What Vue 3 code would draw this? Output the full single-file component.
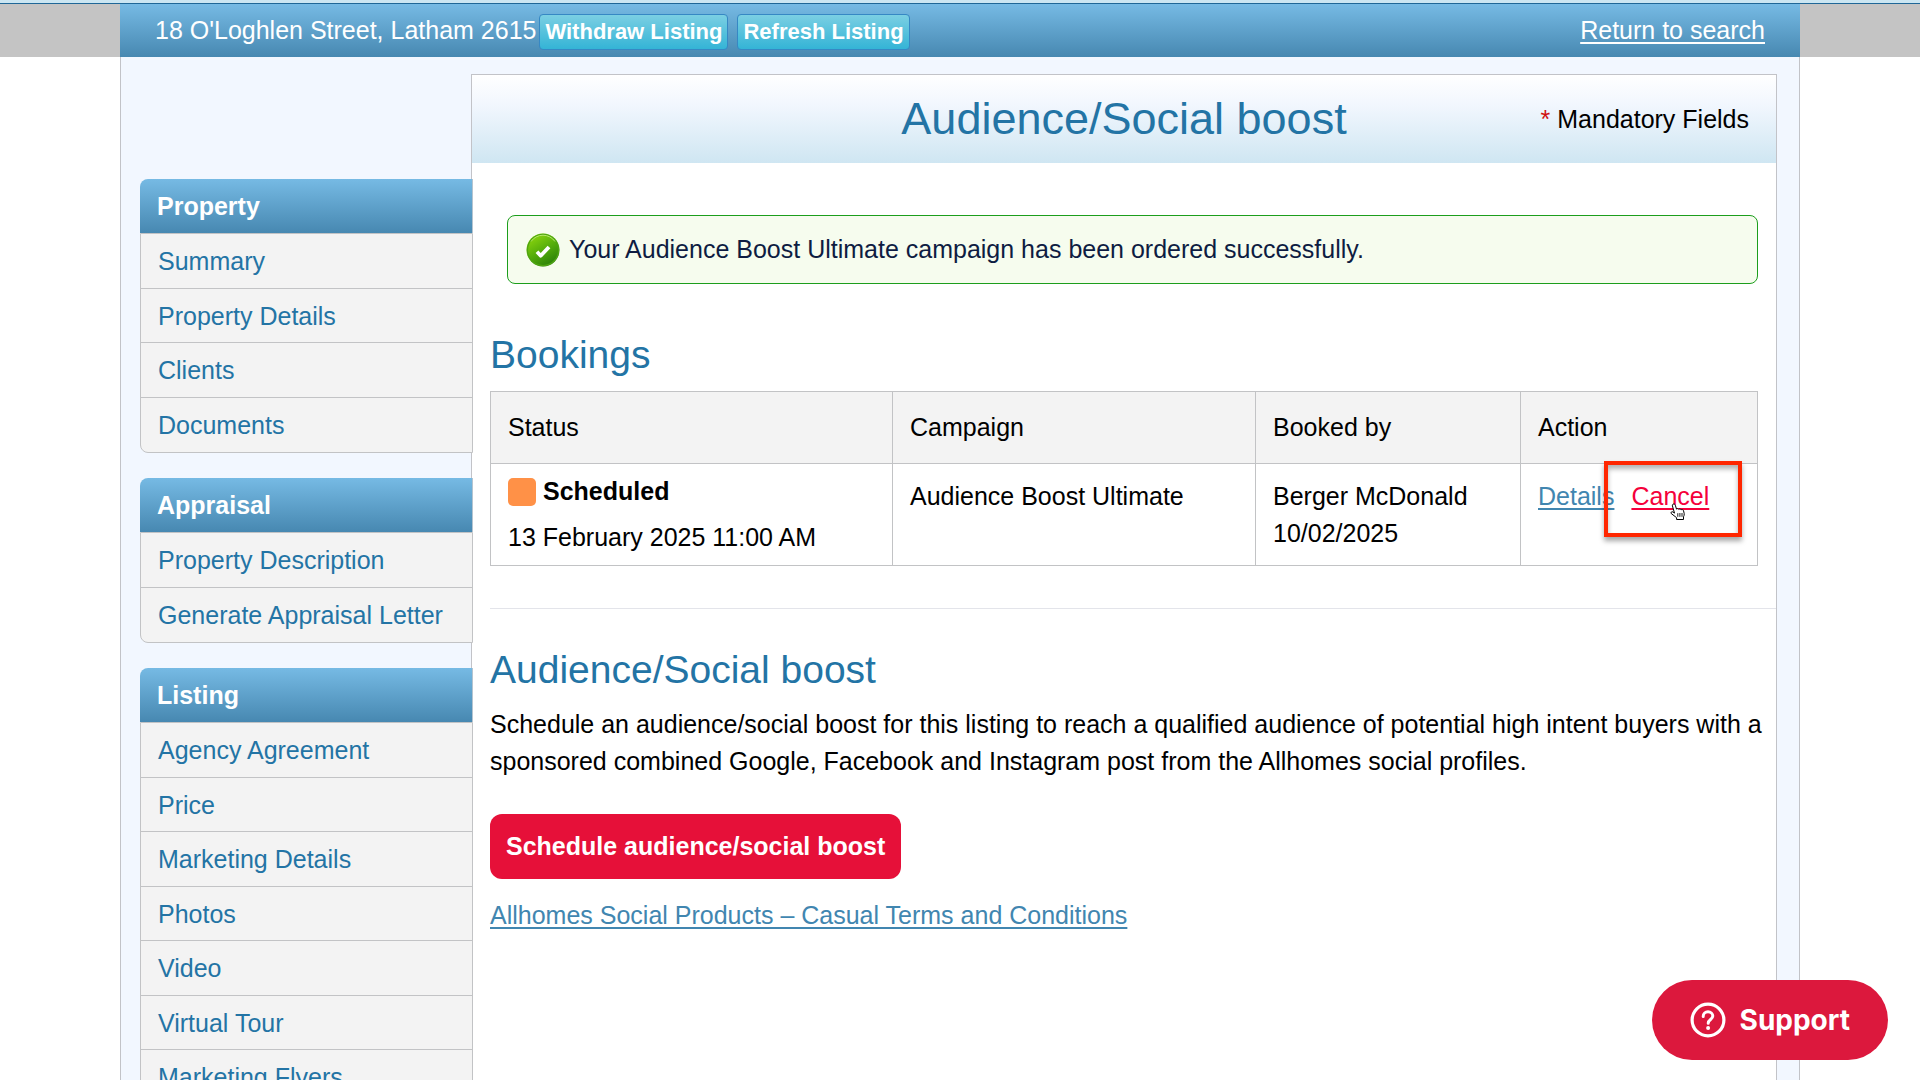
<script setup>
const groups = [
  { title: 'Property', items: ['Summary', 'Property Details', 'Clients', 'Documents'] },
  { title: 'Appraisal', items: ['Property Description', 'Generate Appraisal Letter'] },
  {
    title: 'Listing',
    items: [
      'Agency Agreement',
      'Price',
      'Marketing Details',
      'Photos',
      'Video',
      'Virtual Tour',
      'Marketing Flyers',
    ],
  },
]
</script>

<template>
  <div class="page">
    <div class="top-strip"></div>
    <header class="bar">
      <div class="bar-inner">
        <span>18 O'Loghlen Street, Latham 2615</span>
        <div class="bar-actions">
          <button type="button" class="bar-button">Withdraw Listing</button>
          <button type="button" class="bar-button">Refresh Listing</button>
        </div>
        <a href="#" class="return">Return to search</a>
      </div>
    </header>

    <div class="shell">
      <nav class="sidebar" aria-label="Listing sections">
        <section v-for="group in groups" :key="group.title" class="group">
          <h2 class="group-title">{{ group.title }}</h2>
          <ul class="group-list">
            <li v-for="item in group.items" :key="item"><a href="#">{{ item }}</a></li>
          </ul>
        </section>
      </nav>

      <main class="panel">
        <div class="panel-head">
          <h1>Audience/Social boost</h1>
          <p class="mandatory"><span class="star">*</span> Mandatory Fields</p>
        </div>

        <div class="alert" role="status">
          <svg width="34" height="34" viewBox="0 0 34 34" aria-hidden="true">
            <defs>
              <linearGradient id="tick-fill" x1="0.2" y1="0" x2="0.8" y2="1">
                <stop offset="0" stop-color="#8fd80e" />
                <stop offset="0.5" stop-color="#55ad0b" />
                <stop offset="1" stop-color="#247a08" />
              </linearGradient>
            </defs>
            <circle cx="17" cy="17" r="16.5" fill="url(#tick-fill)" />
            <circle cx="17" cy="17" r="15.6" fill="none" stroke="#4fa413" stroke-width="1.2" />
            <path d="M5 8.500A14.600 14.600 0 0 1 29 8.500" fill="none" stroke="#b5e86a" stroke-width="1" />
            <path d="M11 18.700l3.700 4 8.300-8.700" fill="none" stroke="#fff" stroke-width="3.800" stroke-linejoin="round" />
          </svg>
          <span>Your Audience Boost Ultimate campaign has been ordered successfully.</span>
        </div>

        <section class="bookings">
          <h2 class="section-title">Bookings</h2>
          <table>
            <colgroup>
              <col class="col-status" />
              <col class="col-campaign" />
              <col class="col-booked" />
              <col class="col-action" />
            </colgroup>
            <thead>
              <tr>
                <th scope="col">Status</th>
                <th scope="col">Campaign</th>
                <th scope="col">Booked by</th>
                <th scope="col">Action</th>
              </tr>
            </thead>
            <tbody>
              <tr>
                <td class="status">
                  <div class="status-line"><span class="swatch"></span><strong>Scheduled</strong></div>
                  <div class="status-date">13 February 2025 11:00 AM</div>
                </td>
                <td>Audience Boost Ultimate</td>
                <td>Berger McDonald<br />10/02/2025</td>
                <td>
                  <div class="actions">
                    <a href="#" class="link">Details</a>
                    <span class="cancel-wrap">
                      <a href="#" class="cancel">Cancel</a>
                      <span class="highlight"></span>
                      <svg class="pointer" width="16" height="18" viewBox="0 0 16 18" aria-hidden="true">
                        <path
                          d="M3 1.2c1-.6 2 .1 2.3 1l1.2 3.9c.5-.7 1.8-.7 2.3.3.6-.7 1.9-.5 2.3.4.8-.6 2.1-.2 2.4.8l.7 3c.2 1.2-.2 2.2-.7 3.2v2.7H6.600v-1.800L1.200 10.500c-.7-1 .5-2.300 1.700-1.600l1.600 1.200L2.400 2.900c-.2-.7 0-1.300.6-1.700z"
                          fill="#fff" stroke="#000" stroke-width="1" stroke-linejoin="round"
                        />
                        <path d="M7.800 10.200v3.600M9.900 10v3.800M12 10v3.800" stroke="#000" stroke-width="0.9" fill="none" />
                      </svg>
                    </span>
                  </div>
                </td>
              </tr>
            </tbody>
          </table>
        </section>

        <section class="boost">
          <h2 class="section-title">Audience/Social boost</h2>
          <p>
            Schedule an audience/social boost for this listing to reach a qualified audience of potential high intent buyers with a
            sponsored combined Google, Facebook and Instagram post from the Allhomes social profiles.
          </p>
          <button type="button" class="primary">Schedule audience/social boost</button>
          <div class="terms">
            <a href="#" class="link">Allhomes Social Products – Casual Terms and Conditions</a>
          </div>
        </section>
      </main>
    </div>

    <button type="button" class="support">
      <svg width="36" height="36" viewBox="0 0 36 36" fill="none" stroke="#fff" aria-hidden="true">
        <circle cx="18" cy="18" r="15.900" stroke-width="3.200" />
        <path d="M13.200 14.400c0-2.800 2.100-4.600 4.800-4.600s4.800 1.800 4.800 4.300c0 3.300-4.600 3.500-4.600 7.100" stroke-width="3" stroke-linecap="round" />
        <circle cx="18.100" cy="26" r="2" fill="#fff" stroke="none" />
      </svg>
      <span>Support</span>
    </button>
  </div>
</template>

<style>
body {
  margin: 0;
}
</style>

<style scoped>
* {
  box-sizing: border-box;
}

.page {
  display: flex;
  flex-direction: column;
  height: 100vh;
  overflow-y: auto;
  scrollbar-width: none;
  background: #fff;
  color: #000;
  font-family: "Liberation Sans", Arial, Helvetica, sans-serif;
  font-size: 25px;
  line-height: 37px;
}

h1,
h2,
p,
ul {
  margin: 0;
  padding: 0;
  font-weight: 400;
}

button {
  font-family: inherit;
  cursor: pointer;
}

.top-strip {
  flex: none;
  height: 4px;
  background: #cbe6f2;
  border-bottom: 1px solid #1f6797;
}

.bar {
  flex: none;
  padding: 0 6.25%;
  background: #c4c4c4;
}

.bar-inner {
  display: flex;
  align-items: center;
  height: 53px;
  padding: 0 35px;
  color: #fff;
  background: linear-gradient(#76bae4, #4788b1);
}

.bar-actions {
  display: flex;
  gap: 9px;
  margin: 2px 0 0 3px;
}

.bar-button {
  height: 36px;
  padding: 0 5px;
  border: 1px solid #3688c4;
  border-radius: 4px;
  background: linear-gradient(#7bcfe3, #34b4d6);
  color: #fff;
  font-size: 22px;
  font-weight: 700;
  line-height: 32px;
}

.return {
  margin-left: auto;
  color: #fff;
  text-underline-offset: 3px;
  text-decoration-thickness: 2px;
}

.shell {
  display: flex;
  flex: 1 0 auto;
  margin: 0 6.25%;
  padding: 17px 22px 0 0;
  border: solid #c2c3c8;
  border-width: 0 1px;
  background: #f2f7ff;
}

.sidebar {
  position: relative;
  z-index: 1;
  display: flex;
  flex: 0 0 352px;
  flex-direction: column;
  gap: 25px;
  margin-right: -2px;
  padding: 105px 0 24px 19px;
}

.group-title {
  height: 54px;
  padding-left: 17px;
  border-right: 1px solid #b4c4d0;
  border-radius: 8px 0 0;
  background: linear-gradient(#76bae4, #4788b1);
  color: #fff;
  font-size: 25px;
  font-weight: 700;
  line-height: 54px;
}

.group-list {
  overflow: hidden;
  border: 1px solid #c2c3c5;
  border-radius: 0 0 0 8px;
  background: #f3f3f3;
  list-style: none;
}

.group-list li {
  height: 55px;
  border-bottom: 1px solid #c2c3c5;
}

.group-list li:nth-child(even) {
  height: 54px;
}

.group-list li:last-child {
  border-bottom: 0;
}

.group-list a {
  display: block;
  padding-left: 17px;
  color: #2374a5;
  line-height: 54px;
  text-decoration: none;
}

.panel {
  flex: 1;
  min-width: 0;
  border: 1px solid #c2c3c8;
  border-bottom: 0;
  background: #fff;
}

.panel-head {
  display: grid;
  grid-template-columns: 1fr auto 1fr;
  align-items: center;
  height: 88px;
  padding: 0 27px;
  background: linear-gradient(#fff, #f2f7fe 33%, #cfe6f2);
}

h1 {
  grid-column: 2;
  color: #2374a5;
  font-size: 45px;
  line-height: 54px;
}

.mandatory {
  text-align: right;
}

.star {
  color: #d01010;
}

.alert {
  display: flex;
  align-items: center;
  gap: 9px;
  height: 69px;
  margin: 52px 18px 0 35px;
  padding-left: 18px;
  border: 1px solid #1c9e1c;
  border-radius: 8px;
  background: #f6fcee;
  color: #0e1c42;
}

.bookings {
  margin-left: 18px;
  padding-bottom: 42px;
  border-bottom: 1px solid #e3e4ea;
}

.section-title {
  color: #2374a5;
  font-size: 39px;
  line-height: 54px;
}

.bookings .section-title {
  padding: 44px 0 9px;
}

table {
  width: calc(100% - 18px);
  border-collapse: collapse;
  table-layout: fixed;
}

.col-status {
  width: 402px;
}

.col-campaign {
  width: 363px;
}

.col-booked {
  width: 265px;
}

th,
td {
  padding: 14px 0 9px 17px;
  border: 1px solid #c2c3c5;
  font-weight: 400;
  text-align: left;
  vertical-align: top;
}

th {
  height: 72px;
  padding: 0 0 0 17px;
  background: #f3f3f3;
  vertical-align: middle;
}

.status {
  padding-top: 9px;
}

.status-line {
  display: flex;
  align-items: center;
  gap: 7px;
}

.swatch {
  width: 28px;
  height: 28px;
  border-radius: 5px;
  background: #ff9147;
}

.status-date {
  margin-top: 9px;
}

.link,
.cancel {
  color: #4186b0;
  text-underline-offset: 3px;
  text-decoration-thickness: 2px;
}

.cancel {
  color: #f5003b;
}

.actions {
  display: flex;
  gap: 17px;
}

.cancel-wrap {
  position: relative;
}

/* Callout frame and hand pointer drawn over the Cancel link */
.highlight {
  position: absolute;
  inset: -17px -33px -22px -27px;
  border: 4px solid #ff2600;
  box-shadow: 0 4px 5px rgba(0, 0, 0, 0.35), inset 0 4px 5px rgba(0, 0, 0, 0.3);
  pointer-events: none;
}

.pointer {
  position: absolute;
  top: 25px;
  left: 39px;
  pointer-events: none;
}

.boost {
  padding: 34px 9px 0 18px;
}

.boost p {
  margin-top: 9px;
}

.primary {
  display: block;
  height: 65px;
  margin-top: 34px;
  padding: 0 16px;
  border: 0;
  border-radius: 12px;
  background: #e61039;
  color: #fff;
  font-size: 25px;
  font-weight: 700;
}

.terms {
  margin-top: 18px;
}

.support {
  position: fixed;
  right: 32px;
  bottom: 20px;
  z-index: 2;
  display: flex;
  align-items: center;
  gap: 14px;
  height: 80px;
  padding: 0 38px;
  border: 0;
  border-radius: 40px;
  background: #dc183d;
  color: #fff;
  font-family: Inter, sans-serif;
  font-size: 28px;
  font-weight: 700;
}
</style>
